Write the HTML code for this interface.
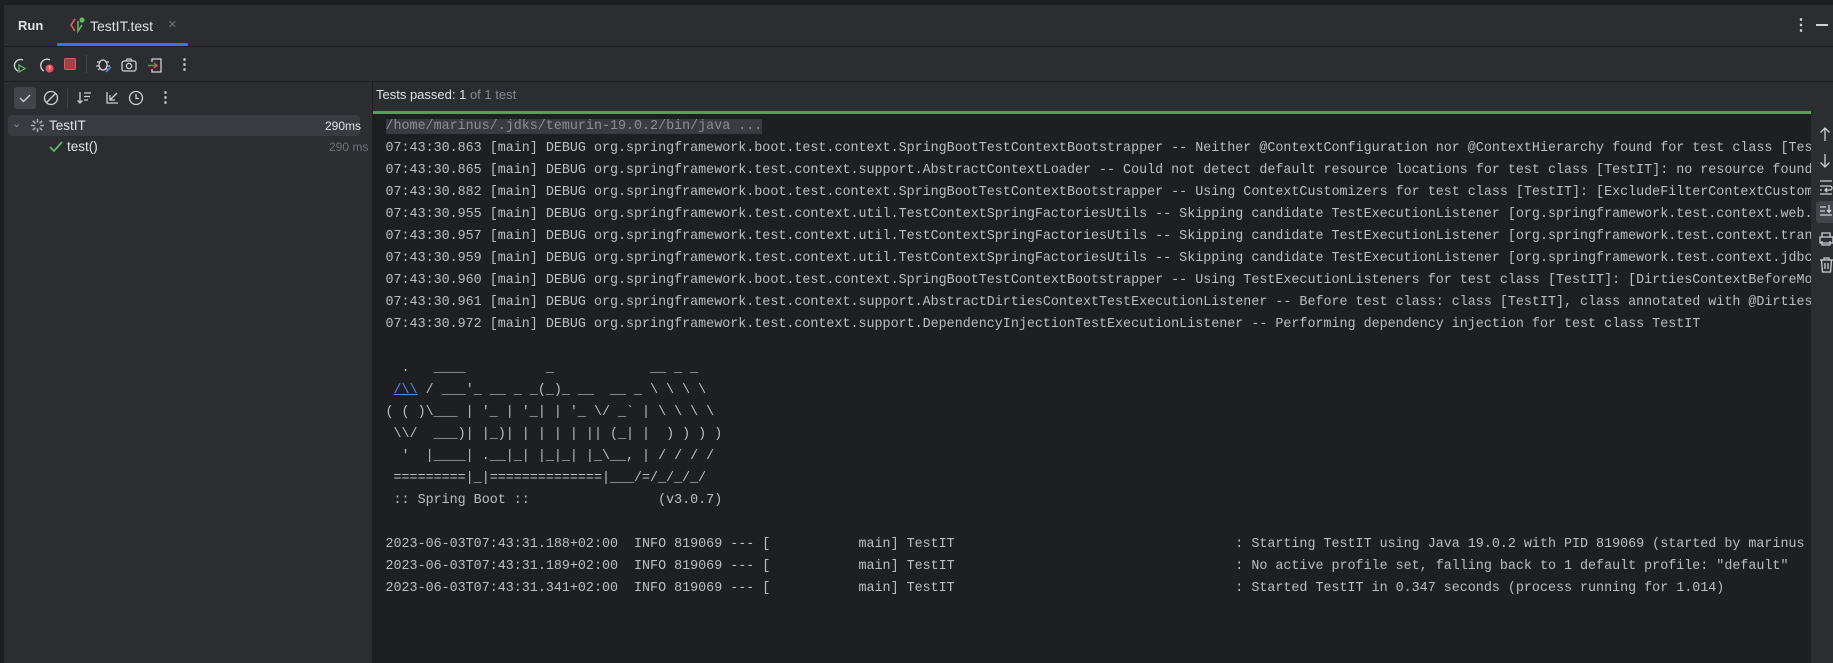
<!DOCTYPE html>
<html><head><meta charset="utf-8"><style>
*{margin:0;padding:0;box-sizing:border-box}
body{width:1833px;height:663px;background:#2b2d30;overflow:hidden;position:relative;font-family:"Liberation Sans",sans-serif;color:#dfe1e5}
.abs{position:absolute}
.ui{font-size:13px}
.con{position:absolute;left:373px;top:111px;width:1438px;height:552px;background:#1e1f22;border-top:3px solid #5a9e5e;overflow:hidden}
pre{font-family:"Liberation Mono",monospace;font-size:13.36px;line-height:22px;color:#bcbec4;position:absolute;left:12.5px;top:2px;white-space:pre}
.hl{background:#393b40;color:#8c8f96}
.lnk{color:#548af7;text-decoration:underline}
.ic{position:absolute;color:#ced0d6}
</style></head><body>
<div class="abs" style="left:0;top:0;width:1833px;height:5px;background:#1e1f22"></div>
<div class="abs" style="left:0;top:0;width:4px;height:663px;background:#1e1f22"></div>
<div class="abs" style="left:4px;top:46px;width:1829px;height:1px;background:#1e1f22"></div>
<div class="abs" style="left:4px;top:81px;width:1829px;height:1px;background:#1e1f22"></div>
<div class="abs" style="left:372px;top:82px;width:1px;height:581px;background:#1e1f22"></div>
<!-- tab bar -->
<div class="abs ui" style="left:18px;top:18px;font-weight:bold;color:#dfe1e5">Run</div>
<svg class="abs" style="left:69px;top:16px" width="18" height="18" viewBox="0 0 18 18"><path d="M6 3 L2 9 L6 15" fill="none" stroke="#db5c5c" stroke-width="1.6"/><path d="M9 5 L9 15 L13 9" fill="none" stroke="#5fb865" stroke-width="1.6"/><circle cx="13" cy="4" r="2.6" fill="#5fb865"/></svg>
<div class="abs ui" style="left:90px;top:18px;font-size:14px;color:#dfe1e5">TestIT.test</div>
<div class="abs" style="left:168px;top:16px;font-size:15px;color:#6f737a">×</div>
<div class="abs" style="left:57px;top:43px;width:131px;height:3px;background:#3574f0;border-radius:1px"></div>
<div class="abs" style="left:1793px;top:15px;font-size:16px;color:#ced0d6;font-weight:bold">⋮</div>
<div class="abs" style="left:1816px;top:24px;width:12px;height:1.5px;background:#ced0d6"></div>
<!-- toolbar 1 -->
<svg class="abs" style="left:10px;top:56px" width="18" height="18"><path d="M13 4 A6 6 0 1 0 8 15" fill="none" stroke="#ced0d6" stroke-width="1.4"/><path d="M9 9 L15 12.5 L9 16Z" fill="none" stroke="#5fb865" stroke-width="1.3"/></svg>
<svg class="abs" style="left:37px;top:56px" width="18" height="18"><path d="M13 4 A6 6 0 1 0 7 15" fill="none" stroke="#ced0d6" stroke-width="1.4"/><circle cx="12.5" cy="12.5" r="4" fill="#e55765"/><rect x="12" y="10" width="1.2" height="3" fill="#fff"/></svg>
<div class="abs" style="left:64px;top:58px;width:12px;height:12px;background:#a63e43;border:1.2px solid #db5c5c;border-radius:2px"></div>
<div class="abs" style="left:86px;top:55px;width:1px;height:18px;background:#43454a"></div>
<svg class="abs" style="left:95px;top:56px" width="18" height="18"><ellipse cx="8" cy="9" rx="4" ry="5" fill="none" stroke="#ced0d6" stroke-width="1.3"/><path d="M2 6h3M11 6h3M1 10h3M12 10h3M3 14l2-2M13 14l-2-2" stroke="#ced0d6" stroke-width="1.2"/><path d="M11 16l5-5" stroke="#548af7" stroke-width="1.4"/></svg>
<svg class="abs" style="left:120px;top:56px" width="18" height="18"><rect x="2" y="5" width="14" height="10" rx="2" fill="none" stroke="#ced0d6" stroke-width="1.3"/><circle cx="9" cy="10" r="2.6" fill="none" stroke="#ced0d6" stroke-width="1.3"/><path d="M6 5l1-2h4l1 2" fill="none" stroke="#ced0d6" stroke-width="1.2"/></svg>
<svg class="abs" style="left:147px;top:56px" width="18" height="18"><path d="M5 6V3h9v13H5v-3" fill="none" stroke="#ced0d6" stroke-width="1.3"/><path d="M1 9.5h8M7 7l3 2.5-3 2.5" fill="none" stroke="#db5c5c" stroke-width="1.4"/></svg>
<div class="abs" style="left:177px;top:55px;font-size:15px;font-weight:bold;color:#ced0d6">⋮</div>
<!-- toolbar 2 -->
<div class="abs" style="left:14px;top:87px;width:22px;height:22px;background:#43454a;border-radius:3px"></div>
<svg class="abs" style="left:16px;top:89px" width="18" height="18"><path d="M4 9l3.5 3.5L14 6" fill="none" stroke="#ced0d6" stroke-width="1.4"/></svg>
<svg class="abs" style="left:42px;top:89px" width="18" height="18"><circle cx="9" cy="9" r="6.5" fill="none" stroke="#ced0d6" stroke-width="1.3"/><path d="M4.5 13.5l9-9" stroke="#ced0d6" stroke-width="1.3"/></svg>
<div class="abs" style="left:67px;top:88px;width:1px;height:20px;background:#43454a"></div>
<svg class="abs" style="left:76px;top:89px" width="18" height="18"><path d="M4 3v11M1.5 11.5L4 14l2.5-2.5M8 4h7M8 7.5h6M8 11h4" fill="none" stroke="#ced0d6" stroke-width="1.3"/></svg>
<svg class="abs" style="left:103px;top:89px" width="18" height="18"><path d="M4 3v11h11M7 11l7-7M7 6v5h5" fill="none" stroke="#ced0d6" stroke-width="1.3"/></svg>
<svg class="abs" style="left:127px;top:89px" width="18" height="18"><circle cx="9" cy="9" r="6.5" fill="none" stroke="#ced0d6" stroke-width="1.3"/><path d="M9 5v4.5h3" fill="none" stroke="#ced0d6" stroke-width="1.3"/></svg>
<div class="abs" style="left:158px;top:88px;font-size:15px;font-weight:bold;color:#ced0d6">⋮</div>
<div class="abs ui" style="left:376px;top:87px;color:#dfe1e5">Tests passed: 1 <span style="color:#868a91">of 1 test</span></div>
<!-- tree -->
<div class="abs" style="left:8px;top:115px;width:352px;height:21px;background:#393b40;border-radius:4px"></div>
<div class="abs" style="left:12px;top:117px;font-size:11px;color:#868a91">⌄</div>
<svg class="abs" style="left:30px;top:118px" width="15" height="15"><g stroke="#ced0d6" stroke-width="1.5" stroke-linecap="round"><path d="M7.5 1.5v2.5M7.5 11v2.5M1.5 7.5h2.5M11 7.5h2.5M3.3 3.3l1.7 1.7M10 10l1.7 1.7M3.3 11.7L5 10M10 5l1.7-1.7" opacity=".8"/></g></svg>
<div class="abs ui" style="left:49px;top:118px;font-size:13.5px">TestIT</div>
<div class="abs ui" style="left:325px;top:119px;font-size:12px">290ms</div>
<svg class="abs" style="left:48px;top:140px" width="16" height="14"><path d="M2 7l4 4 8-9" fill="none" stroke="#5fb865" stroke-width="1.8"/></svg>
<div class="abs ui" style="left:67px;top:139px;font-size:13.5px">test()</div>
<div class="abs ui" style="left:329px;top:140px;font-size:12px;color:#6f737a">290 ms</div>
<!-- console -->
<div class="con"><pre><span class="hl">/home/marinus/.jdks/temurin-19.0.2/bin/java ...</span>
07:43:30.863 [main] DEBUG org.springframework.boot.test.context.SpringBootTestContextBootstrapper -- Neither @ContextConfiguration nor @ContextHierarchy found for test class [TestIT], using SpringBootContextLoader
07:43:30.865 [main] DEBUG org.springframework.test.context.support.AbstractContextLoader -- Could not detect default resource locations for test class [TestIT]: no resource found for suffixes
07:43:30.882 [main] DEBUG org.springframework.boot.test.context.SpringBootTestContextBootstrapper -- Using ContextCustomizers for test class [TestIT]: [ExcludeFilterContextCustomizer, Duplicate
07:43:30.955 [main] DEBUG org.springframework.test.context.util.TestContextSpringFactoriesUtils -- Skipping candidate TestExecutionListener [org.springframework.test.context.web.ServletTest
07:43:30.957 [main] DEBUG org.springframework.test.context.util.TestContextSpringFactoriesUtils -- Skipping candidate TestExecutionListener [org.springframework.test.context.transaction.Tra
07:43:30.959 [main] DEBUG org.springframework.test.context.util.TestContextSpringFactoriesUtils -- Skipping candidate TestExecutionListener [org.springframework.test.context.jdbc.SqlScript
07:43:30.960 [main] DEBUG org.springframework.boot.test.context.SpringBootTestContextBootstrapper -- Using TestExecutionListeners for test class [TestIT]: [DirtiesContextBeforeModesTestExec
07:43:30.961 [main] DEBUG org.springframework.test.context.support.AbstractDirtiesContextTestExecutionListener -- Before test class: class [TestIT], class annotated with @DirtiesContext [fals
07:43:30.972 [main] DEBUG org.springframework.test.context.support.DependencyInjectionTestExecutionListener -- Performing dependency injection for test class TestIT

  .   ____          _            __ _ _
 <span class="lnk">/\\</span> / ___'_ __ _ _(_)_ __  __ _ \ \ \ \
( ( )\___ | '_ | '_| | '_ \/ _` | \ \ \ \
 \\/  ___)| |_)| | | | | || (_| |  ) ) ) )
  '  |____| .__|_| |_|_| |_\__, | / / / /
 =========|_|==============|___/=/_/_/_/
 :: Spring Boot ::                (v3.0.7)

2023-06-03T07:43:31.188+02:00  INFO 819069 --- [           main] TestIT                                   : Starting TestIT using Java 19.0.2 with PID 819069 (started by marinus in /home
2023-06-03T07:43:31.189+02:00  INFO 819069 --- [           main] TestIT                                   : No active profile set, falling back to 1 default profile: "default"
2023-06-03T07:43:31.341+02:00  INFO 819069 --- [           main] TestIT                                   : Started TestIT in 0.347 seconds (process running for 1.014)</pre></div>
<!-- right gutter -->
<svg class="abs" style="left:1818px;top:125px" width="15" height="160"><g fill="none" stroke="#ced0d6" stroke-width="1.3"><path d="M7 3v13M2.5 7.5L7 3l4.5 4.5"/><path d="M7 29v13M2.5 37.5L7 42l4.5-4.5"/><path d="M2 56h12M2 61h10a2 2 0 0 1 0 4H7M9 63l-2 2 2 2M2 65h2M2 69h12"/></g></svg>
<div class="abs" style="left:1816px;top:201px;width:17px;height:22px;background:#43454a;border-radius:3px 0 0 3px"></div>
<svg class="abs" style="left:1818px;top:203px" width="15" height="80"><g fill="none" stroke="#ced0d6" stroke-width="1.3"><path d="M2 4h6M2 8h5M2 12h12M11 2v7M9 7l2 2.5 2-2.5"/><path d="M4 34v-4h8v4M2 34h13v6H2zM4 38v4h8v-4"/><path d="M2 57h13M6 57v-2h5v2M3.5 57l1 12h8l1-12M7 60v6M10 60v6"/></g></svg>
</body></html>
